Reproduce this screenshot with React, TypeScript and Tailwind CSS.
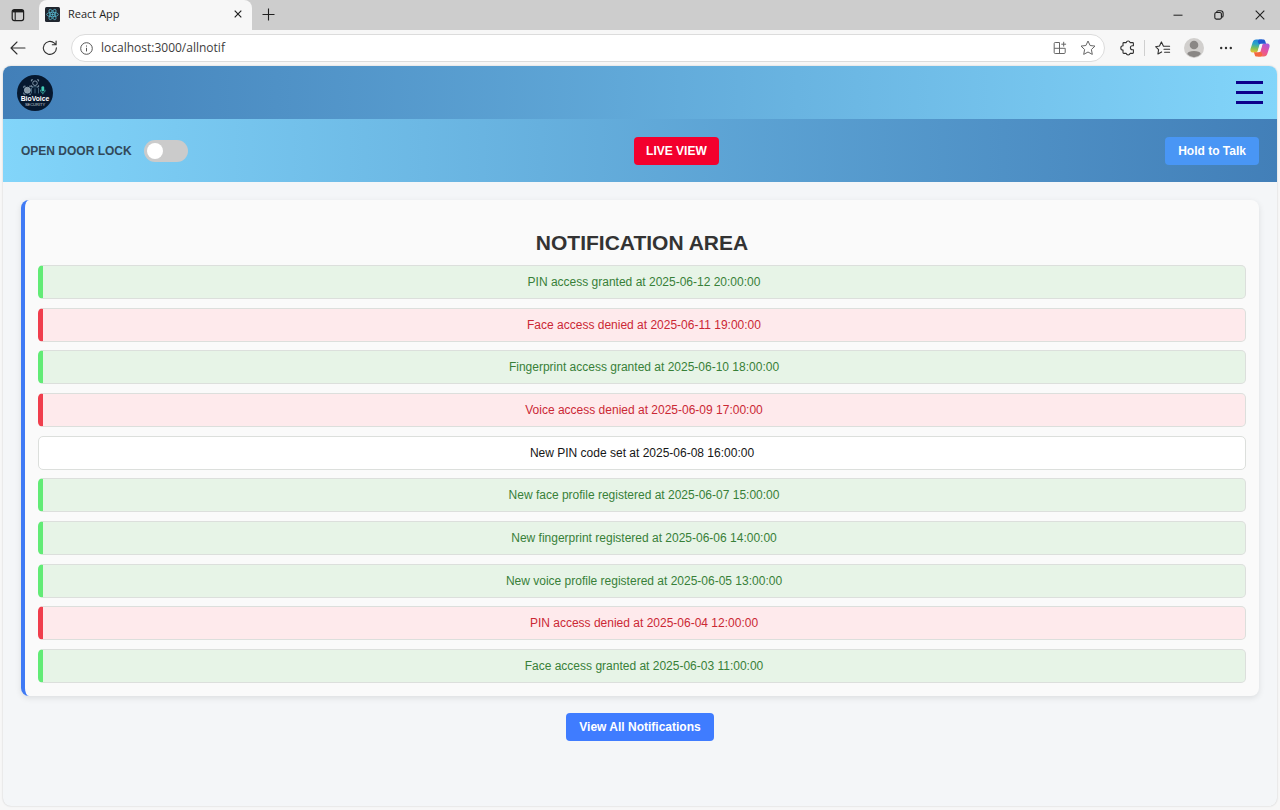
import { useState } from 'react';

type Kind = 'granted' | 'denied' | 'neutral';

const notifications: { text: string; kind: Kind }[] = [
  { text: 'PIN access granted at 2025-06-12 20:00:00', kind: 'granted' },
  { text: 'Face access denied at 2025-06-11 19:00:00', kind: 'denied' },
  { text: 'Fingerprint access granted at 2025-06-10 18:00:00', kind: 'granted' },
  { text: 'Voice access denied at 2025-06-09 17:00:00', kind: 'denied' },
  { text: 'New PIN code set at 2025-06-08 16:00:00', kind: 'neutral' },
  { text: 'New face profile registered at 2025-06-07 15:00:00', kind: 'granted' },
  { text: 'New fingerprint registered at 2025-06-06 14:00:00', kind: 'granted' },
  { text: 'New voice profile registered at 2025-06-05 13:00:00', kind: 'granted' },
  { text: 'PIN access denied at 2025-06-04 12:00:00', kind: 'denied' },
  { text: 'Face access granted at 2025-06-03 11:00:00', kind: 'granted' },
];

const kindStyles: Record<Kind, string> = {
  granted: 'border-l-5 border-l-[#62eb76] bg-[#e7f4e7] text-[#388038]',
  denied: 'border-l-5 border-l-[#f03e4d] bg-[#feeaec] text-[#cb2834]',
  neutral: 'bg-white text-[#161616]',
};

function TabStrip() {
  return (
    <div className="flex h-[30px] items-center bg-[#cdcdcd] text-[#1f1f1f]">
      <button aria-label="Tab actions" className="flex w-[39px] justify-center pr-1">
        <svg width="14" height="14" viewBox="0 0 14 14" fill="none" stroke="currentColor">
          <rect x="1.2" y="1.6" width="11.4" height="11" rx="2" strokeWidth="1.2" />
          <path d="M1.5 3.2h11" strokeWidth="2.4" />
          <path d="M4.2 4v8.5" strokeWidth="1.1" />
        </svg>
      </button>
      <div className="flex h-full w-[213px] items-center rounded-t-lg bg-[#f7f7f7] pr-2 pl-1.5 pb-0.5">
        <svg width="15" height="15" viewBox="0 0 15 15" fill="none" stroke="#58b9d1" strokeWidth="0.8">
          <rect width="15" height="15" rx="1.5" fill="#20262f" stroke="none" />
          <ellipse cx="7.5" cy="7.5" rx="5.8" ry="2.2" />
          <ellipse cx="7.5" cy="7.5" rx="5.8" ry="2.2" transform="rotate(60 7.5 7.5)" />
          <ellipse cx="7.5" cy="7.5" rx="5.8" ry="2.2" transform="rotate(120 7.5 7.5)" />
          <circle cx="7.5" cy="7.5" r="0.8" fill="#58b9d1" />
        </svg>
        <span className="ml-2 flex-1 text-[11px]">React App</span>
        <button aria-label="Close tab" className="flex size-3 items-center justify-center">
          <svg width="8" height="8" viewBox="0 0 8 8" stroke="currentColor" strokeWidth="1.2">
            <path d="M0.7 0.7l6.6 6.6M7.3 0.7l-6.6 6.6" />
          </svg>
        </button>
      </div>
      <button aria-label="New tab" className="flex w-8 justify-center pb-0.5">
        <svg width="13" height="13" viewBox="0 0 13 13" stroke="currentColor" strokeWidth="1.1">
          <path d="M6.5 0.5v12M0.5 6.5h12" />
        </svg>
      </button>
      <div className="ml-auto flex items-center">
        <button aria-label="Minimize" className="flex w-[41px] justify-center">
          <svg width="10" height="10" viewBox="0 0 10 10" stroke="currentColor">
            <path d="M0.5 5.2h9" />
          </svg>
        </button>
        <button aria-label="Restore" className="flex w-[41px] justify-center">
          <svg width="10" height="10" viewBox="0 0 10 10" fill="none" stroke="currentColor" strokeWidth="1.1">
            <rect x="0.8" y="2.5" width="6.6" height="6.6" rx="1.5" />
            <path d="M2.6 2.2C2.8 1.2 3.4 0.8 4.2 0.8h2.4a2.5 2.5 0 0 1 2.5 2.5v2.4c0 0.9-0.5 1.4-1.4 1.6" />
          </svg>
        </button>
        <button aria-label="Close" className="flex w-[41px] justify-center">
          <svg width="10" height="10" viewBox="0 0 10 10" stroke="currentColor" strokeWidth="1.1">
            <path d="M0.7 0.7l8.6 8.6M9.3 0.7l-8.6 8.6" />
          </svg>
        </button>
      </div>
    </div>
  );
}

function CopilotIcon() {
  return (
    <svg width="20" height="18" viewBox="0 0 20 18" fill="none">
      <defs>
        <linearGradient id="leftBand" x1="6" y1="0" x2="4" y2="14" gradientUnits="userSpaceOnUse">
          <stop stopColor="#2284dc" />
          <stop offset="0.35" stopColor="#29a5c8" />
          <stop offset="0.65" stopColor="#7cc05a" />
          <stop offset="1" stopColor="#f4c228" />
        </linearGradient>
        <linearGradient id="rightBand" x1="17" y1="4" x2="10" y2="18" gradientUnits="userSpaceOnUse">
          <stop stopColor="#a35be0" />
          <stop offset="0.5" stopColor="#e452a2" />
          <stop offset="1" stopColor="#fa7052" />
        </linearGradient>
      </defs>
      <path d="M6.2 0.5H13c-1.2 0.2-1.7 1-2.1 2.2L8.3 11c-0.5 1.6-1.2 2.4-2.8 2.4H2.8C0.8 13.4 0 12 0.5 10l2-6.3C3.2 1.5 4.2 0.5 6.2 0.5z" fill="url(#leftBand)" />
      <path d="M13.8 17.5H7c1.2-0.2 1.7-1 2.1-2.2L11.7 7c0.5-1.6 1.2-2.4 2.8-2.4h2.7c2 0 2.8 1.4 2.3 3.4l-2 6.3c-0.7 2.2-1.7 3.2-3.7 3.2z" fill="url(#rightBand)" />
      <path d="M9.6 0.5h3.8c1 0 1.5 0.6 1.8 1.6l0.9 2.7h-3.3c-1.2 0-3 0.1-3.8 0.4l-1.2-2.4C8.1 1.5 8.6 0.5 9.6 0.5z" fill="#2257cf" />
      <path d="M10.4 17.5H6.6c-1 0-1.5-0.6-1.8-1.6l-0.9-2.7h3.3c1.2 0 3-0.1 3.8-0.4l1.2 2.4c-0.3 1.3-0.8 2.3-1.8 2.3z" fill="#f4663f" />
      <path d="M9.6 5.2h2.9L10.4 12.8H7.5z" fill="#f7f7f7" />
    </svg>
  );
}

function Toolbar() {
  const [url, setUrl] = useState('localhost:3000/allnotif');
  return (
    <div className="flex h-9 items-center bg-[#f7f7f7] pr-[10px] pl-[9px] text-[#303030]">
      <button aria-label="Back" className="flex w-[17px] justify-center">
        <svg width="16" height="14" viewBox="0 0 16 14" fill="none" stroke="currentColor" strokeWidth="1.1" strokeLinecap="round" strokeLinejoin="round">
          <path d="M7 1L1 7l6 6M1 7h14" />
        </svg>
      </button>
      <button aria-label="Refresh" className="ml-4 flex w-4 justify-center">
        <svg width="16" height="16" viewBox="0 0 16 16" fill="none" stroke="currentColor" strokeWidth="1.1" strokeLinecap="round">
          <path d="M14.4 7.9A6.5 6.5 0 1 1 12.4 3.2L14 4.7M14.1 1v3.8h-3.8" />
        </svg>
      </button>
      <div className="ml-[13px] flex h-7 flex-1 items-center rounded-full border border-[#dcdcdc] bg-white px-2">
        <svg width="13" height="13" viewBox="0 0 13 13" fill="none" stroke="#555" strokeWidth="1">
          <circle cx="6.5" cy="6.5" r="5.8" />
          <path d="M6.5 5.8v3.6M6.5 3.5v1.1" />
        </svg>
        <input
          aria-label="Address"
          value={url}
          onChange={(e) => setUrl(e.target.value)}
          className="ml-2 min-w-0 flex-1 bg-transparent text-xs text-[#3d3d3d] outline-none"
        />
        <button aria-label="Add app" className="flex w-4 justify-center text-[#666]">
          <svg width="14" height="14" viewBox="0 0 14 14" fill="none" stroke="currentColor" strokeWidth="1">
            <path d="M6.5 1.5H2.2a1 1 0 0 0-1 1v9a1 1 0 0 0 1 1h9a1 1 0 0 0 1-1V7.3H1.2M6.5 1.5v11M10.7 0.8v4.8M8.3 3.2h4.8" />
          </svg>
        </button>
        <button aria-label="Favorite" className="ml-3 flex w-4 justify-center text-[#666]">
          <svg width="16" height="16" viewBox="0 0 16 16" fill="none" stroke="currentColor" strokeWidth="1" strokeLinejoin="round">
            <path d="M8 1l2.1 4.5 4.9 0.6-3.6 3.4 0.9 4.9L8 12l-4.3 2.4 0.9-4.9L1 6.1l4.9-0.6z" />
          </svg>
        </button>
      </div>
      <button aria-label="Extensions" className="ml-[14px] flex w-4 justify-center">
        <svg width="15" height="16" viewBox="0 0 15 16" fill="none" stroke="currentColor" strokeWidth="1.1" strokeLinejoin="round">
          <path d="M3.8 2.6h2.4a2 2 0 0 1 3.9 0h2.5a0.8 0.8 0 0 1 0.8 0.8v2.3h-1a1.9 1.9 0 0 0 0 4h1v2.9a0.8 0.8 0 0 1-0.8 0.8h-2.5a2 2 0 0 1-3.9 0H3.8a0.8 0.8 0 0 1-0.8-0.8v-2.5a2.1 2.1 0 0 1 0-4.4V3.4a0.8 0.8 0 0 1 0.8-0.8z" />
        </svg>
      </button>
      <span className="ml-[9px] h-4 w-px bg-[#cfcfcf]" />
      <button aria-label="Favorites list" className="ml-[10px] flex w-4 justify-center">
        <svg width="16" height="15" viewBox="0 0 16 15" fill="none" stroke="currentColor" strokeWidth="1.1" strokeLinejoin="round" strokeLinecap="round">
          <path d="M10.2 5.2H8.5L6.4 0.9 4.5 5l-3.9 0.7 3 3L2.9 13l3.7-2.1M9.6 5.3h5M9 8.3h5.6M9.6 11.3h5" />
        </svg>
      </button>
      <button aria-label="Profile" className="ml-[13px] flex size-5 justify-center">
        <svg width="20" height="20" viewBox="0 0 20 20">
          <circle cx="10" cy="10" r="10" fill="#d1cfcd" />
          <circle cx="10" cy="7" r="4.3" fill="#8a8785" />
          <path d="M3.2 16c0.6-2.4 3-3.1 6.8-3.1s6.2 0.7 6.8 3.1A9.5 9.5 0 0 1 10 19.3 9.5 9.5 0 0 1 3.2 16z" fill="#8a8785" />
        </svg>
      </button>
      <button aria-label="Settings and more" className="ml-[15px] flex w-[14px] justify-center">
        <svg width="14" height="4" viewBox="0 0 14 4" fill="currentColor">
          <circle cx="2.2" cy="2" r="1.2" />
          <circle cx="7" cy="2" r="1.2" />
          <circle cx="11.8" cy="2" r="1.2" />
        </svg>
      </button>
      <button aria-label="Copilot" className="ml-[17px] flex w-5 justify-center">
        <CopilotIcon />
      </button>
    </div>
  );
}

function Logo() {
  return (
    <svg width="36" height="36" viewBox="0 0 36 36" role="img" aria-label="BioVoice Security">
      <circle cx="18" cy="18" r="18" fill="#06182f" />
      <g fill="none" stroke="#9bb0c0" strokeWidth="0.8">
        <path d="M14.4 6.4V4.8H16M20 4.8h1.6v1.6M21.6 10.2v1.6H20M16 11.8h-1.6v-1.6" />
        <circle cx="18" cy="8.2" r="2.3" />
        <path d="M15.4 12.6c0.6-1.2 4.6-1.2 5.2 0M14.5 12.8v5.6M18 13.4v5M21.5 12.8v5.6" stroke="#4d758c" />
        <circle cx="10.4" cy="15.2" r="3" fill="#8696a3" />
        <path d="M6.8 13v-1.8h1.8M12.2 11.2H14M6.8 17.4v1.8h1.8M12.2 19.2H14" />
        <path d="M23.5 14.8c0 4.2 4.6 4.2 4.6 0M25.8 17.9v1.4" stroke="#3bb7a9" />
      </g>
      <rect x="24.4" y="11.2" width="2.8" height="5.2" rx="1.4" fill="#41cbb5" />
      <text x="18" y="26.4" textAnchor="middle" fontSize="6.8" fontWeight="700" fill="#fff" fontFamily="Liberation Sans, sans-serif">BioVoice</text>
      <text x="18" y="30.6" textAnchor="middle" fontSize="4" fill="#c4ced7" fontFamily="Liberation Sans, sans-serif">SECURITY</text>
    </svg>
  );
}

function DoorLockSwitch() {
  return (
    <label className="flex items-center gap-3 text-xs font-bold text-[#32495a]">
      OPEN DOOR LOCK
      <input
        type="checkbox"
        role="switch"
        className="flex h-[22px] w-11 appearance-none items-center rounded-full bg-[#cbcbcb] px-[3px] before:size-4 before:rounded-full before:bg-white before:content-[''] checked:justify-end checked:bg-[#3f7cff]"
      />
    </label>
  );
}

export default function App() {
  return (
    <div className="flex min-h-screen flex-col bg-[#f7f7f7] font-['Open_Sans','Noto_Sans',sans-serif]">
      <TabStrip />
      <Toolbar />
      <div className="mx-[3px] mb-1 flex flex-1 flex-col overflow-hidden rounded-lg bg-[#f4f6f8] font-['Liberation_Sans',Arial,sans-serif] shadow-[0_0_2px_#00000033]">
        <header className="flex h-[53px] items-center justify-between bg-linear-to-r from-[#427fb8] to-[#82d5fa] px-[14px]">
          <Logo />
          <button aria-label="Menu" className="flex w-[27px] flex-col gap-[7px]">
            <span className="h-[3px] bg-[#0d008b]" />
            <span className="h-[3px] bg-[#0d008b]" />
            <span className="h-[3px] bg-[#0d008b]" />
          </button>
        </header>
        <div className="flex h-[63px] items-center justify-between bg-linear-to-r from-[#82d5fa] to-[#427fb8] px-[18px]">
          <DoorLockSwitch />
          <button className="h-7 rounded bg-[#f3002d] px-3 text-xs font-bold text-white">LIVE VIEW</button>
          <button className="h-7 rounded bg-[#4996f5] px-[13px] text-xs font-bold text-white">Hold to Talk</button>
        </div>
        <main className="flex flex-col items-center gap-[17px] px-[18px] py-[18px]">
          <section className="w-full rounded-lg border-l-4 border-[#3f7af5] bg-[#fafafa] px-[13px] pt-[29px] pb-[13px] shadow-[0_2px_6px_#0000001a]">
            <h1 className="pb-2 text-center text-[21px] leading-7 font-bold text-[#333]">NOTIFICATION AREA</h1>
            <ul className="flex min-h-[418px] flex-col justify-between gap-2">
              {notifications.map(({ text, kind }) => (
                <li
                  key={text}
                  className={`flex h-[34px] items-center justify-center rounded-[5px] border border-[#dcdfdc] text-xs ${kindStyles[kind]}`}
                >
                  {text}
                </li>
              ))}
            </ul>
          </section>
          <button className="h-7 rounded bg-[#3f7cff] px-[13px] text-xs font-bold text-white">
            View All Notifications
          </button>
        </main>
      </div>
    </div>
  );
}
